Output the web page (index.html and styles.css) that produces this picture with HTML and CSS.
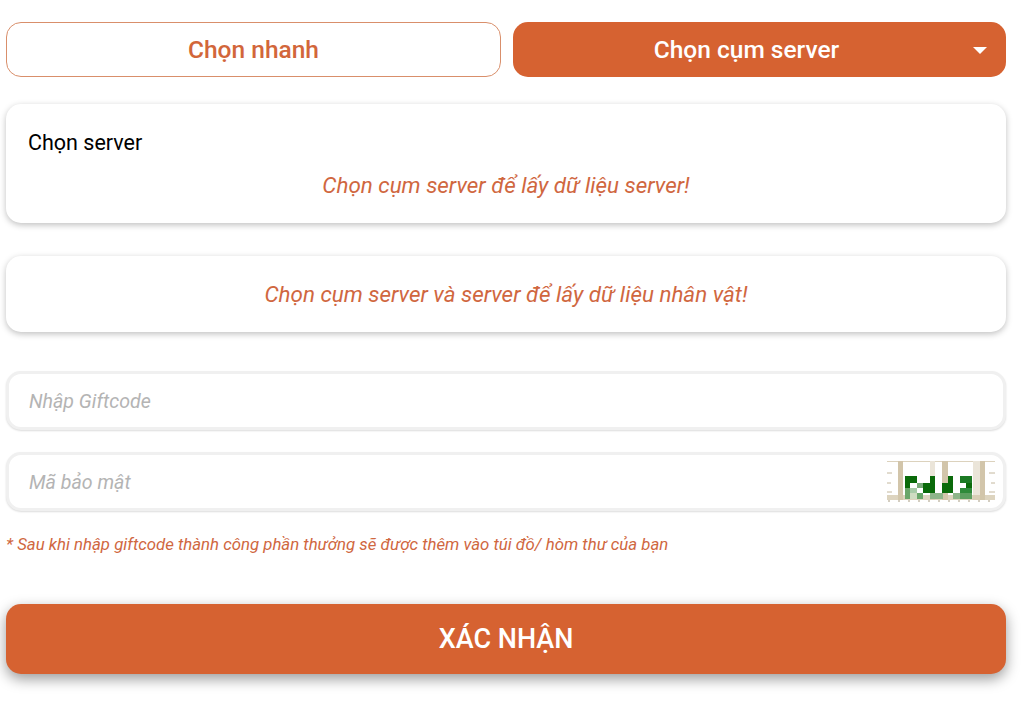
FILE: index.html
```html
<!DOCTYPE html>
<html lang="vi">
<head>
  <meta charset="UTF-8">
  <title>Nhập Giftcode</title>
  <link rel="stylesheet" href="styles.css">
</head>
<body>
  <form class="gift-form">
    <div class="tabs">
      <button type="button" class="tab tab-outline">Chọn nhanh</button>
      <button type="button" class="tab tab-solid">Chọn cụm server<span class="caret"></span></button>
    </div>

    <div class="card card-server">
      <div class="card-title">Chọn server</div>
      <p class="hint">Chọn cụm server để lấy dữ liệu server!</p>
    </div>

    <div class="card card-role">
      <p class="hint">Chọn cụm server và server để lấy dữ liệu nhân vật!</p>
    </div>

    <div class="field field-first">
      <input type="text" placeholder="Nhập Giftcode">
    </div>
    <div class="field field-captcha">
      <input type="text" placeholder="Mã bảo mật">
      <svg class="captcha" width="110" height="42" viewBox="0 0 110 42">
        <rect width="110" height="42" fill="#fff"/>
        <rect x="1" y="0" width="108" height="1" fill="#dcd2bd"/>
        <rect x="12" y="0" width="5" height="39" fill="#d2c5aa"/>
        <rect x="44" y="0" width="5" height="39" fill="#ebe5d9"/>
        <rect x="56" y="0" width="6" height="39" fill="#d2c5aa"/>
        <rect x="87" y="0" width="7" height="39" fill="#ebe5d9"/>
        <rect x="94" y="0" width="5" height="39" fill="#d2c5aa"/>
        <rect x="1" y="34" width="108" height="5" fill="#d2c5aa" opacity="0.75"/>
        <path d="M1 12h5M1 22h4M1 31h5M103 12h6M105 22h4M103 31h6" stroke="#c4b89e" stroke-width="1"/>
        <path d="M3 39v2M13 39v2M23 39v2M33 39v2M43 39v2M53 39v2M63 39v2M73 39v2M83 39v2M93 39v2M103 39v2" stroke="#a89c82" stroke-width="1"/>
        <rect x="19" y="15" width="12" height="7" fill="#0a6a0a"/>
        <rect x="19" y="22" width="5" height="5" fill="#0a6a0a"/>
        <rect x="19" y="27" width="5" height="11" fill="#6aa66a"/>
        <rect x="24" y="27" width="7" height="5" fill="#a8cba8"/>
        <rect x="24" y="32" width="7" height="6" fill="#cfdcc2"/>
        <rect x="31" y="22" width="6" height="5" fill="#7aab7a"/>
        <rect x="31" y="32" width="6" height="6" fill="#6aa66a"/>
        <rect x="37" y="22" width="12" height="10" fill="#0a6a0a"/>
        <rect x="44" y="15" width="5" height="7" fill="#0a6a0a"/>
        <rect x="44" y="32" width="13" height="6" fill="#8eb58a"/>
        <rect x="56" y="22" width="11" height="10" fill="#0a6a0a"/>
        <rect x="62" y="15" width="5" height="7" fill="#0a6a0a"/>
        <rect x="67" y="32" width="7" height="6" fill="#8eb58a"/>
        <rect x="74" y="15" width="12" height="7" fill="#1c7a24"/>
        <rect x="80" y="22" width="6" height="5" fill="#0a6a0a"/>
        <rect x="74" y="27" width="12" height="5" fill="#2f8a3a"/>
        <rect x="74" y="32" width="12" height="6" fill="#5d9f60"/>
      </svg>
    </div>

    <p class="note">* Sau khi nhập giftcode thành công phần thưởng sẽ được thêm vào túi đồ/ hòm thư của bạn</p>

    <button type="submit" class="btn-submit">XÁC NHẬN</button>
  </form>
</body>
</html>
```

FILE: styles.css
```css
* {
  box-sizing: border-box;
}
body {
  margin: 0;
  background: #fff;
  font-family: Roboto, "Liberation Sans", sans-serif;
  color: #000;
}
button,
input {
  font-family: inherit;
}
.gift-form {
  width: 1000px;
  margin-left: 6px;
  padding: 22px 0 30px;
}
.tabs {
  display: grid;
  grid-template-columns: 495px 493px;
  gap: 12px;
}
.tab {
  position: relative;
  height: 55px;
  border-radius: 15px;
  font-size: 24.5px;
  font-weight: 500;
  padding: 0;
}
.tab-outline {
  background: #fff;
  border: 1px solid #d98f6b;
  color: #d2663a;
}
.tab-solid {
  background: #d66231;
  border: none;
  color: #fff;
  padding-right: 26px;
}
.caret {
  position: absolute;
  right: 19px;
  top: 25px;
  border-left: 7px solid transparent;
  border-right: 7px solid transparent;
  border-top: 7px solid #fff;
}
.card {
  background: #fff;
  border-radius: 15px;
  box-shadow: 0 2px 6px rgba(0, 0, 0, 0.25);
}
.card-server {
  height: 119px;
  margin-top: 27px;
  padding: 26px 22px 0;
}
.card-title {
  font-size: 21.5px;
  line-height: 25px;
}
.card-role {
  height: 76px;
  margin-top: 33px;
  padding-top: 25px;
}
.hint {
  margin: 0;
  text-align: center;
  font-size: 22.4px;
  line-height: 26px;
  font-style: italic;
  color: #d0673f;
}
.card-server .hint {
  margin-top: 17px;
}
.field {
  position: relative;
  height: 59px;
  margin-top: 22px;
}
.field-first {
  margin-top: 39px;
}
.field input {
  width: 100%;
  height: 100%;
  padding: 2px 20px 0;
  border: 3px solid #f0f0f0;
  border-radius: 15px;
  background: #fff;
  font-size: 19.6px;
  font-style: italic;
  outline: none;
  box-shadow: 0 1px 2px rgba(0, 0, 0, 0.14);
}
.field input::placeholder {
  color: #b4b4b4;
}
.captcha {
  position: absolute;
  right: 10px;
  top: 9px;
  filter: blur(0.4px);
}
.note {
  margin: 23px 0 0;
  font-size: 16.8px;
  line-height: 20px;
  font-style: italic;
  color: #d0673f;
}
.btn-submit {
  display: block;
  width: 100%;
  height: 70px;
  margin-top: 50px;
  border: none;
  border-radius: 15px;
  background: #d66231;
  color: #fff;
  font-size: 27px;
  font-weight: 500;
  box-shadow: 0 5px 14px rgba(0, 0, 0, 0.4);
}
```
